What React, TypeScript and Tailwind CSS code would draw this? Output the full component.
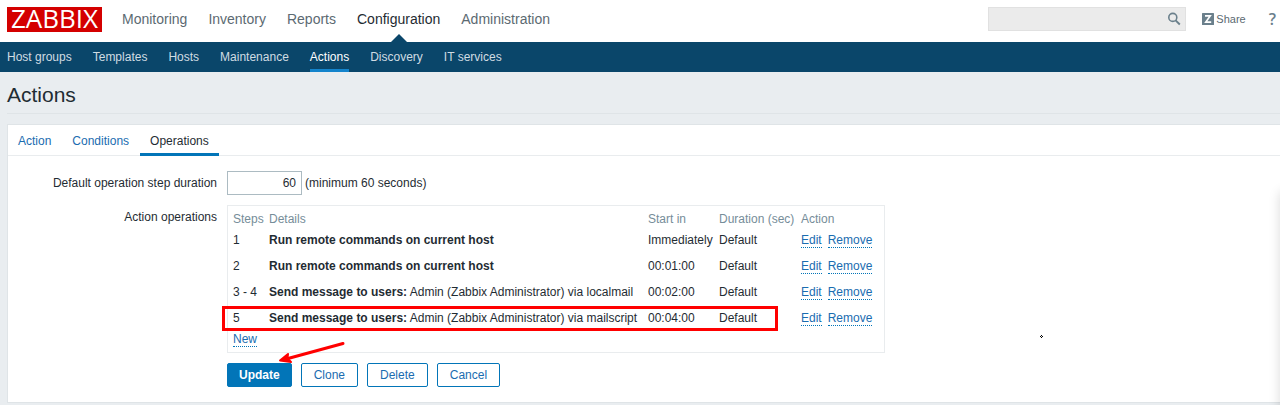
import React from "react";

const mainMenu = ["Monitoring", "Inventory", "Reports", "Configuration", "Administration"];
const subMenu = ["Host groups", "Templates", "Hosts", "Maintenance", "Actions", "Discovery", "IT services"];
const tabs = ["Action", "Conditions", "Operations"];

type Operation = {
  steps: string;
  title: string;
  detail?: string;
  start: string;
  marked?: boolean;
};

const operations: Operation[] = [
  { steps: "1", title: "Run remote commands on current host", start: "Immediately" },
  { steps: "2", title: "Run remote commands on current host", start: "00:01:00" },
  { steps: "3 - 4", title: "Send message to users:", detail: "Admin (Zabbix Administrator) via localmail", start: "00:02:00" },
  { steps: "5", title: "Send message to users:", detail: "Admin (Zabbix Administrator) via mailscript", start: "00:04:00", marked: true },
];

function Header() {
  return (
    <header className="flex h-[42px] items-start bg-white pl-[7px] pr-1">
      <a
        href="#home"
        className="mt-[7px] flex h-[25px] w-[95px] shrink-0 items-center justify-center bg-[#d40000] pb-[3px] font-['Open_Sans',sans-serif] text-[26px] font-medium leading-none text-white"
      >
        ZABBIX
      </a>
      <nav aria-label="Main" className="ml-5 flex h-[42px] gap-[21px] text-sm leading-[38px]">
        {mainMenu.map((item) => {
          const active = item === "Configuration";
          return (
            <a key={item} href="#menu" className={active ? "relative text-[#1f2c33]" : "text-[#5c6a72]"}>
              {item}
              {active && (
                <svg className="absolute bottom-0 left-1/2 -translate-x-1/2" width="16" height="8" viewBox="0 0 16 8" aria-hidden="true">
                  <path d="M0 8L8 0L16 8Z" fill="#0a466a" />
                </svg>
              )}
            </a>
          );
        })}
      </nav>
      <div className="ml-auto flex h-[38px] items-center">
        <form className="relative" onSubmit={(e) => e.preventDefault()}>
          <input
            type="text"
            aria-label="Search"
            className="block h-6 w-[198px] border border-[#e1e1e1] bg-[#ebebeb] pl-1 pr-7 text-xs outline-none"
          />
          <button type="submit" aria-label="Submit search" className="absolute right-[5px] top-[5px]">
            <svg width="14" height="14" viewBox="0 0 14 14" fill="none" stroke="#6b808c">
              <circle cx="5.8" cy="5.4" r="4" strokeWidth="1.6" />
              <path d="M8.6 8.3L12.8 12.5" strokeWidth="1.9" />
            </svg>
          </button>
        </form>
        <a href="#share" className="ml-4 flex items-center gap-[2px] text-[11px] text-[#5c6a72]">
          <svg width="12" height="12" viewBox="0 0 12 12" aria-hidden="true">
            <rect width="12" height="12" rx="0.5" fill="#6b808c" />
            <path d="M3 2.9H8.2L3.8 9.1H9.2" fill="none" stroke="#fff" strokeWidth="1.7" />
          </svg>
          Share
        </a>
        <a href="#help" className="ml-[23px] font-['Open_Sans',sans-serif] text-base font-semibold text-[#6b808c]">
          ?
        </a>
      </div>
    </header>
  );
}

function OperationsTable() {
  return (
    <div className="relative w-fit border border-[#e9ecee] px-[5px] pb-[5px] pt-1">
      <table className="w-[646px] table-fixed border-collapse text-left">
        <colgroup>
          <col className="w-9" />
          <col className="w-[379px]" />
          <col className="w-[71px]" />
          <col className="w-[82px]" />
          <col className="w-[78px]" />
        </colgroup>
        <thead>
          <tr className="h-[17px] whitespace-nowrap text-[#768d99]">
            <th className="p-0 font-normal">Steps</th>
            <th className="p-0 font-normal">Details</th>
            <th className="p-0 font-normal">Start in</th>
            <th className="p-0 font-normal">Duration (sec)</th>
            <th className="p-0 font-normal">Action</th>
          </tr>
        </thead>
        <tbody className="whitespace-nowrap">
          {operations.map((op) => (
            <tr key={op.steps} className="relative h-[26px]">
              <td className="p-0">
                {op.steps}
                {op.marked && (
                  <span className="pointer-events-none absolute -left-[11px] top-[1px] h-[25px] w-[556px] border-3 border-[#ff0000]" />
                )}
              </td>
              <td className="p-0">
                <b>{op.title}</b> {op.detail}
              </td>
              <td className="p-0">{op.start}</td>
              <td className="p-0">Default</td>
              <td className="p-0">
                <span className="flex gap-[6px]">
                  <DottedButton>Edit</DottedButton>
                  <DottedButton>Remove</DottedButton>
                </span>
              </td>
            </tr>
          ))}
          <tr className="h-4">
            <td className="p-0">
              <span className="flex">
                <DottedButton>New</DottedButton>
              </span>
            </td>
          </tr>
        </tbody>
      </table>
      <svg className="pointer-events-none absolute left-[50px] top-[134px]" width="70" height="26" viewBox="0 0 70 26" aria-hidden="true">
        <path d="M65 3.5L10 18.5" stroke="#ff0000" strokeWidth="3" strokeLinecap="round" />
        <path d="M2 20.5L10 14L9.5 18.5L13 22Z" fill="#ff0000" stroke="#ff0000" strokeWidth="2" strokeLinejoin="round" />
      </svg>
    </div>
  );
}

function DottedButton({ children }: { children: React.ReactNode }) {
  return (
    <button type="button" className="h-4 border-b border-dotted border-[#0275b8] pt-[2px] leading-[13px] text-[#1a6cb0]">
      {children}
    </button>
  );
}

export default function App() {
  return (
    <div className="relative min-h-screen overflow-hidden bg-[#e9edf0] pb-[2px] font-['Liberation_Sans',Arial,sans-serif] text-xs text-[#1f2c33]">
      <Header />
      <nav aria-label="Configuration" className="flex h-[30px] gap-[21px] bg-[#0a466a] pl-[7px] leading-[30px] text-[#d0dce3]">
        {subMenu.map((item) => (
          <a key={item} href="#section" className={item === "Actions" ? "border-b-3 border-[#1484cc] text-white" : ""}>
            {item}
          </a>
        ))}
      </nav>
      <main className="pl-[7px]">
        <h1 className="h-[42px] border-b border-[#dfe4e7] pt-[11px] text-[21px] leading-6">Actions</h1>
        <section className="mt-[10px] border border-r-0 border-[#dfe4e7] bg-white pb-[15px]">
          <div role="tablist" className="flex h-[31px] gap-px border-b border-[#e9ecee]">
            {tabs.map((tab) => (
              <button
                key={tab}
                type="button"
                role="tab"
                aria-selected={tab === "Operations"}
                className={
                  tab === "Operations"
                    ? "h-[31px] px-[10px] shadow-[inset_0_-3px_0_#0275b8]"
                    : "h-[31px] px-[10px] text-[#1a6cb0]"
                }
              >
                {tab}
              </button>
            ))}
          </div>
          <div className="mt-[15px] grid grid-cols-[209px_1fr] gap-x-[10px] gap-y-[10px]">
            <label htmlFor="duration" className="text-right leading-6">
              Default operation step duration
            </label>
            <div className="flex items-center gap-[3px]">
              <input
                id="duration"
                type="text"
                defaultValue="60"
                className="h-6 w-[75px] border border-[#acbbc2] bg-white px-[5px] text-right outline-none"
              />
              (minimum 60 seconds)
            </div>
            <span className="text-right leading-6">Action operations</span>
            <OperationsTable />
            <div className="col-start-2 flex gap-[9px]">
              <button type="button" className="h-6 rounded-xs border border-[#0275b8] bg-[#0275b8] px-[11px] font-bold text-white">
                Update
              </button>
              {["Clone", "Delete", "Cancel"].map((label) => (
                <button key={label} type="button" className="h-6 rounded-xs border border-[#0275b8] bg-white px-3 text-[#1a6cb0]">
                  {label}
                </button>
              ))}
            </div>
          </div>
        </section>
      </main>
      <svg className="absolute left-[1040px] top-[335px]" width="3" height="3" viewBox="0 0 3 3" shapeRendering="crispEdges" aria-hidden="true">
        <path d="M1 0h1v1h-1zM0 1h1v1h-1zM2 1h1v1h-1zM1 2h1v1h-1z" fill="#000" />
      </svg>
      <div className="absolute -bottom-5 left-full top-[192px] w-5 shadow-[0_0_12px_rgba(0,0,0,0.15)]" />
    </div>
  );
}
